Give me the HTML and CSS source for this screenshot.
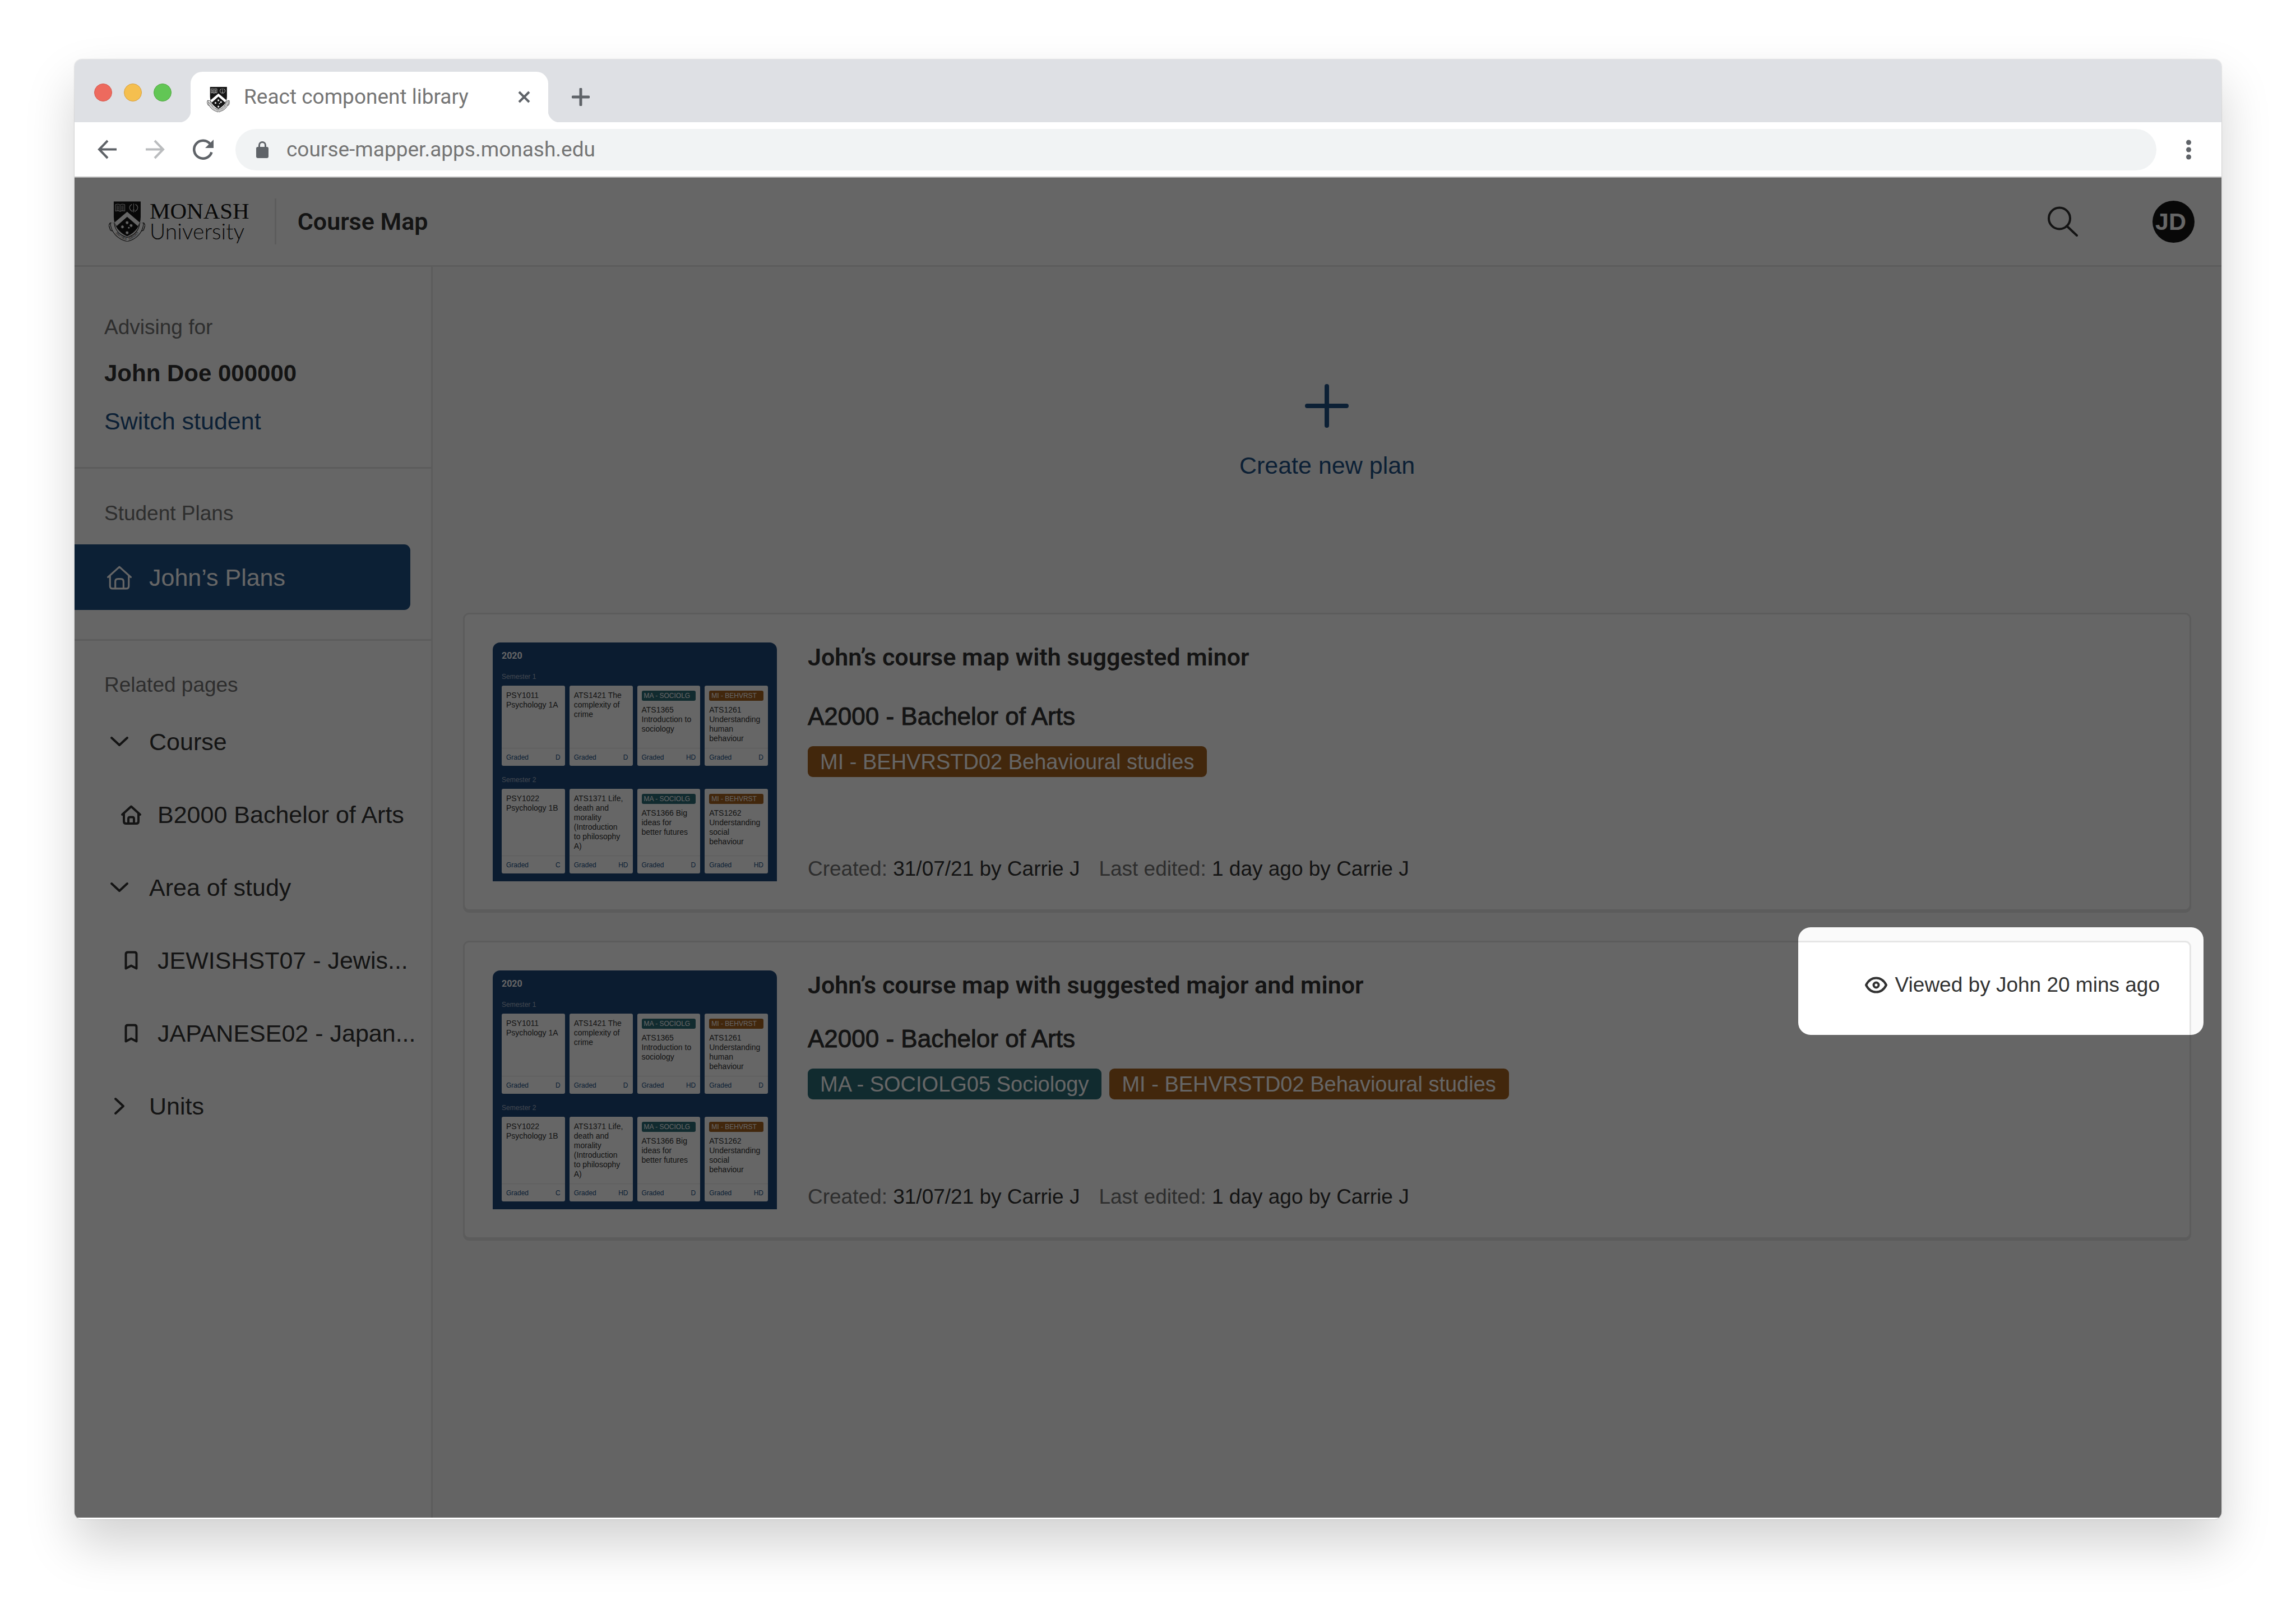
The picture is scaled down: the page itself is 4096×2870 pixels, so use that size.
FILE: index.html
```html
<!DOCTYPE html>
<html lang="en">
<head>
<meta charset="utf-8">
<title>React component library</title>
<link rel="stylesheet" href="styles.css">
</head>
<body>
<svg class="sprite" aria-hidden="true">
  <symbol id="crest" viewBox="0 0 218 240">
    <path d="M9 128L0 142L10 172L22 178M209 128L218 142L208 172L196 178M9 128L28 136M209 128L190 136" fill="#fff" stroke="#161616" stroke-width="4"/>
    <path d="M21 130C26 182 62 215 110 228C158 215 192 182 197 130" fill="none" stroke="#161616" stroke-width="27"/>
    <path d="M21 130C26 182 62 215 110 228C158 215 192 182 197 130" fill="none" stroke="#fff" stroke-width="20"/>
    <path d="M30 0H191V92C191 146 160 186 110 209C60 186 30 146 30 92Z" fill="#161616"/>
    <path d="M110 62L186 127L174 148L110 92L47 148L34 127Z" fill="#fff"/>
    <g fill="none" stroke="#fff" stroke-width="3">
      <path d="M40 19C52 15 62 16 68 21C74 16 84 15 96 19V58C84 55 74 56 68 61C62 56 52 55 40 58Z M68 21V61"/>
      <path d="M46 27L62 29M46 35L62 37M46 43L62 45M46 51L62 53M74 29L90 27M74 37L90 35M74 45L90 43M74 53L90 51"/>
      <path d="M149 13V66M143 52H155"/>
      <path d="M138 18C120 28 120 50 142 60M160 18C178 28 178 50 156 60" stroke-width="5" stroke-dasharray="5 2"/>
    </g>
    <g fill="#fff">
      <path d="M110 116l3 6 6-1-3 5 4 5-6 1-1 6-3-4-5 3 0-6-6-2 5-4-2-5 6 1z"/>
      <path d="M134 133l3 6 6-1-3 5 4 5-6 1-1 6-3-4-5 3 0-6-6-2 5-4-2-5 6 1z"/>
      <path d="M82 141l3 6 6-1-3 5 4 5-6 1-1 6-3-4-5 3 0-6-6-2 5-4-2-5 6 1z"/>
      <path d="M110 176l3 6 6-1-3 5 4 5-6 1-1 6-3-4-5 3 0-6-6-2 5-4-2-5 6 1z"/>
      <circle cx="120" cy="158" r="5"/>
    </g>
  </symbol>
  <symbol id="home" viewBox="0 0 44 44">
    <path d="M2.500 21.500L22 4L41.500 21.500M6 19V36.500C6 39.500 8 41 10.500 41H33.500C36 41 38 39.500 38 36.500V19M15 41V29C15 26 17 24.500 19.500 24.500H24.500C27 24.500 29 26 29 29V41"/>
  </symbol>
  <symbol id="home-small" viewBox="0 0 44 44">
    <path d="M6 22L22 7.500L38 22M9 20V34C9 36.500 10.500 38 13 38H31C33.500 38 35 36.500 35 34V20M17 38V29.500C17 27.500 18 26.500 20 26.500H24C26 26.500 27 27.500 27 29.500V38"/>
  </symbol>
  <symbol id="bookmark" viewBox="0 0 44 44">
    <path d="M12.500 36.500V11C12.500 8.500 14 7.500 16 7.500H28C30 7.500 31.500 8.500 31.500 11V36.500L22 31.500Z"/>
  </symbol>
  <symbol id="chevron" viewBox="0 0 52 52">
    <path d="M12 19L26 32L40 19"/>
  </symbol>
  <symbol id="chevron-closed" viewBox="0 0 52 52">
    <path d="M19 13L33 26L19 39"/>
  </symbol>
</svg>

<div class="window">
  <div class="tabstrip">
    <div class="lights"><i class="light light-red"></i><i class="light light-amber"></i><i class="light light-green"></i></div>
    <div class="tab">
      <svg class="favicon" viewBox="0 0 218 240" aria-hidden="true"><use href="#crest"/><path class="motto-marks" d="M21 130C26 182 62 215 110 228C158 215 192 182 197 130"/></svg>
      <span class="tab-title">React component library</span>
      <button class="plain tab-close" aria-label="Close tab">
        <svg width="22" height="22" viewBox="0 0 22 22"><path d="M2 2L20 20M20 2L2 20" stroke="#5f6368" stroke-width="4"/></svg>
      </button>
    </div>
    <button class="plain tab-new" aria-label="New tab">
      <svg width="32" height="32" viewBox="0 0 32 32"><path d="M16 2V30M2 16H30" stroke="#5f6368" stroke-width="5" stroke-linecap="round"/></svg>
    </button>
  </div>

  <div class="toolbar">
    <div class="nav">
      <button class="plain" aria-label="Back"><svg width="35" height="35" viewBox="0 0 35 35"><path d="M34 17.500H4M18 2L3 17.500L18 33" fill="none" stroke="#5f6368" stroke-width="4"/></svg></button>
      <button class="plain" aria-label="Forward"><svg width="35" height="35" viewBox="0 0 35 35"><path d="M1 17.500H31M17 2L32 17.500L17 33" fill="none" stroke="#babcbe" stroke-width="4"/></svg></button>
      <button class="plain" aria-label="Reload"><svg width="37" height="37" viewBox="0 0 37 37"><path d="M31 9A16 16 0 1 0 33.500 23.500" fill="none" stroke="#5f6368" stroke-width="4.500"/><path d="M37 1V16H22Z" fill="#5f6368"/></svg></button>
    </div>
    <div class="address">
      <svg width="22" height="30" viewBox="0 0 22 30" aria-hidden="true"><rect y="10" width="22" height="20" rx="3" fill="#5f6368"/><path d="M5.500 12V7A5.500 5.500 0 0 1 16.500 7V12" fill="none" stroke="#5f6368" stroke-width="3"/></svg>
      <input class="url" type="text" aria-label="Address" value="course-mapper.apps.monash.edu">
    </div>
    <button class="plain" aria-label="Browser menu"><svg width="9" height="36" viewBox="0 0 9 36"><g fill="#5f6368"><circle cx="4.500" cy="5" r="4.500"/><circle cx="4.500" cy="18" r="4.500"/><circle cx="4.500" cy="31" r="4.500"/></g></svg></button>
  </div>

  <div class="app">
    <header class="header">
      <a class="logo" href="#" aria-label="Monash University">
        <svg class="logo-crest" viewBox="0 0 218 240" aria-hidden="true">
          <use href="#crest"/>
          <path id="motto-line" d="M16 138C26 184 62 221 110 233C158 221 192 184 202 138" fill="none"/>
          <text class="motto"><textPath href="#motto-line" startOffset="50%" text-anchor="middle">ANCORA · IMPARO</textPath></text>
        </svg>
        <span class="logo-text"><span class="logo-name">MONASH</span><span class="logo-kind">University</span></span>
      </a>
      <h1 class="product">Course Map</h1>
      <button class="plain search" aria-label="Search">
        <svg width="54" height="54" viewBox="0 0 54 54"><circle cx="21" cy="21.500" r="19" fill="none" stroke="#323232" stroke-width="4"/><path d="M34 35L52 52" stroke="#323232" stroke-width="4" stroke-linecap="round"/></svg>
      </button>
      <button class="plain avatar" aria-label="Account: JD">JD</button>
    </header>

    <div class="body">
      <aside class="sidebar">
        <section class="student">
          <p class="label">Advising for</p>
          <p class="student-name">John Doe 000000</p>
          <a class="link" href="#">Switch student</a>
        </section>
        <nav class="plans" aria-label="Student plans">
          <p class="label">Student Plans</p>
          <a class="item item-active" href="#"><svg class="icon" aria-hidden="true"><use href="#home"/></svg>John’s Plans</a>
        </nav>
        <nav class="related" aria-label="Related pages">
          <p class="label">Related pages</p>
          <button class="plain item"><svg class="icon" aria-hidden="true"><use href="#chevron"/></svg>Course</button>
          <a class="item item-nested" href="#"><svg class="icon" aria-hidden="true"><use href="#home-small"/></svg>B2000 Bachelor of Arts</a>
          <button class="plain item"><svg class="icon" aria-hidden="true"><use href="#chevron"/></svg>Area of study</button>
          <a class="item item-nested" href="#"><svg class="icon" aria-hidden="true"><use href="#bookmark"/></svg>JEWISHST07 - Jewis...</a>
          <a class="item item-nested" href="#"><svg class="icon" aria-hidden="true"><use href="#bookmark"/></svg>JAPANESE02 - Japan...</a>
          <button class="plain item"><svg class="icon" aria-hidden="true"><use href="#chevron-closed"/></svg>Units</button>
        </nav>
      </aside>

      <main class="main">
        <div class="create">
          <button class="plain create-button">
            <svg width="78" height="78" viewBox="0 0 78 78" aria-hidden="true"><path d="M39 4V74M4 39H74" stroke="#205086" stroke-width="8" stroke-linecap="round"/></svg>
            Create new plan
          </button>
        </div>

        <article class="card">
          <div class="map">
            <p class="map-year">2020</p>
            <p class="map-term">Semester 1</p>
            <div class="units">
              <div class="unit"><p>PSY1011<br>Psychology 1A</p><div class="grade"><span>Graded</span><span>D</span></div></div>
              <div class="unit"><p>ATS1421 The<br>complexity of<br>crime</p><div class="grade"><span>Graded</span><span>D</span></div></div>
              <div class="unit"><span class="chip major">MA - SOCIOLG</span><p>ATS1365<br>Introduction to<br>sociology</p><div class="grade"><span>Graded</span><span>HD</span></div></div>
              <div class="unit"><span class="chip minor">MI - BEHVRST</span><p>ATS1261<br>Understanding<br>human<br>behaviour</p><div class="grade"><span>Graded</span><span>D</span></div></div>
            </div>
            <p class="map-term">Semester 2</p>
            <div class="units units-tall">
              <div class="unit"><p>PSY1022<br>Psychology 1B</p><div class="grade"><span>Graded</span><span>C</span></div></div>
              <div class="unit"><p>ATS1371 Life,<br>death and<br>morality<br>(Introduction<br>to philosophy<br>A)</p><div class="grade"><span>Graded</span><span>HD</span></div></div>
              <div class="unit"><span class="chip major">MA - SOCIOLG</span><p>ATS1366 Big<br>ideas for<br>better futures</p><div class="grade"><span>Graded</span><span>D</span></div></div>
              <div class="unit"><span class="chip minor">MI - BEHVRST</span><p>ATS1262<br>Understanding<br>social<br>behaviour</p><div class="grade"><span>Graded</span><span>HD</span></div></div>
            </div>
          </div>
          <div class="details">
            <div class="card-head"><h2 class="card-title">John’s course map with suggested minor</h2></div>
            <p class="course">A2000 - Bachelor of Arts</p>
            <div class="tags"><span class="tag minor">MI - BEHVRSTD02 Behavioural studies</span></div>
            <p class="meta"><span><span class="muted">Created:</span> 31/07/21 by Carrie J</span><span><span class="muted">Last edited:</span> 1 day ago by Carrie J</span></p>
          </div>
        </article>

        <article class="card card-compact">
          <div class="map">
            <p class="map-year">2020</p>
            <p class="map-term">Semester 1</p>
            <div class="units">
              <div class="unit"><p>PSY1011<br>Psychology 1A</p><div class="grade"><span>Graded</span><span>D</span></div></div>
              <div class="unit"><p>ATS1421 The<br>complexity of<br>crime</p><div class="grade"><span>Graded</span><span>D</span></div></div>
              <div class="unit"><span class="chip major">MA - SOCIOLG</span><p>ATS1365<br>Introduction to<br>sociology</p><div class="grade"><span>Graded</span><span>HD</span></div></div>
              <div class="unit"><span class="chip minor">MI - BEHVRST</span><p>ATS1261<br>Understanding<br>human<br>behaviour</p><div class="grade"><span>Graded</span><span>D</span></div></div>
            </div>
            <p class="map-term">Semester 2</p>
            <div class="units units-tall">
              <div class="unit"><p>PSY1022<br>Psychology 1B</p><div class="grade"><span>Graded</span><span>C</span></div></div>
              <div class="unit"><p>ATS1371 Life,<br>death and<br>morality<br>(Introduction<br>to philosophy<br>A)</p><div class="grade"><span>Graded</span><span>HD</span></div></div>
              <div class="unit"><span class="chip major">MA - SOCIOLG</span><p>ATS1366 Big<br>ideas for<br>better futures</p><div class="grade"><span>Graded</span><span>D</span></div></div>
              <div class="unit"><span class="chip minor">MI - BEHVRST</span><p>ATS1262<br>Understanding<br>social<br>behaviour</p><div class="grade"><span>Graded</span><span>HD</span></div></div>
            </div>
          </div>
          <div class="details">
            <div class="card-head">
              <h2 class="card-title">John’s course map with suggested major and minor</h2>
              <p class="viewed"><svg width="40" height="30" viewBox="0 0 40 30" aria-hidden="true"><path d="M2 15C6 7 12 2.500 20 2.500S34 7 38 15C34 23 28 27.500 20 27.500S6 23 2 15Z" fill="none" stroke="#323232" stroke-width="4"/><circle cx="20" cy="15" r="4.500" fill="none" stroke="#323232" stroke-width="4"/></svg>Viewed by John 20 mins ago</p>
            </div>
            <p class="course">A2000 - Bachelor of Arts</p>
            <div class="tags"><span class="tag major">MA - SOCIOLG05 Sociology</span><span class="tag minor">MI - BEHVRSTD02 Behavioural studies</span></div>
            <p class="meta"><span><span class="muted">Created:</span> 31/07/21 by Carrie J</span><span><span class="muted">Last edited:</span> 1 day ago by Carrie J</span></p>
          </div>
          <div class="spotlight"></div>
        </article>
      </main>
    </div>
  </div>
</div>
</body>
</html>
```
FILE: styles.css
```css
* { box-sizing: border-box; }

body {
  margin: 0;
  min-height: 100vh;
  padding: 106px 133px 160px;
  display: flex;
  flex-direction: column;
  background: #fff;
  color: #323232;
  font-family: "Liberation Sans", Arial, sans-serif;
  font-size: 43px;
  line-height: 52px;
}

h1, h2, p { margin: 0; }
a { color: inherit; text-decoration: none; }
svg { display: block; flex: none; }

.sprite { position: absolute; width: 0; height: 0; }

.plain {
  margin: 0;
  padding: 0;
  border: 0;
  background: none;
  color: inherit;
  font: inherit;
  text-align: left;
}

.motto {
  font-family: "Liberation Serif", serif;
  font-size: 19px;
  fill: #161616;
}
.motto-marks {
  fill: none;
  stroke: #161616;
  stroke-width: 12;
  stroke-dasharray: 4 9;
}

/* Browser window */
.window {
  flex: 1;
  display: flex;
  flex-direction: column;
  padding-bottom: 3px;
  overflow: hidden;
  border-radius: 13px;
  background: #fff;
  box-shadow: 0 0 2px rgba(0, 0, 0, .3), 0 44px 88px rgba(0, 0, 0, .18);
}

.tabstrip {
  display: flex;
  height: 112px;
  padding-left: 35px;
  background: #dee0e4;
  font-family: Roboto, sans-serif;
}

.lights { display: flex; gap: 21px; padding-top: 43px; }
.light { width: 32px; height: 32px; border-radius: 50%; border: 1px solid; }
.light-red { background: #ed6a5e; border-color: #d65a4f; }
.light-amber { background: #f5bf4f; border-color: #d8a140; }
.light-green { background: #62c655; border-color: #55a845; }

.tab {
  position: relative;
  display: flex;
  align-items: center;
  width: 638px;
  margin: 22px 0 0 34px;
  padding: 0 32px 0 29px;
  border-radius: 21px 21px 0 0;
  background: #fff;
}
.tab::before, .tab::after {
  content: "";
  position: absolute;
  bottom: 0;
  width: 21px;
  height: 21px;
}
.tab::before { right: 100%; background: radial-gradient(circle at 0 0, transparent 21px, #fff 22px); }
.tab::after { left: 100%; background: radial-gradient(circle at 100% 0, transparent 21px, #fff 22px); }
.favicon { width: 41px; height: 45px; margin-top: 8px; }
.tab-title { margin-left: 25px; font-size: 37px; color: #757575; }
.tab-close { margin-left: auto; }
.tab-new { padding: 22px 0 0 42px; }

.toolbar {
  display: flex;
  align-items: center;
  height: 99px;
  padding: 0 54px 0 41px;
  border-bottom: 2px solid #b4b4b4;
}
.nav { display: flex; gap: 50px; }
.address {
  flex: 1;
  display: flex;
  align-items: center;
  gap: 32px;
  height: 74px;
  margin: 0 53px 0 39px;
  padding: 0 37px;
  border-radius: 37px;
  background: #f1f3f4;
}
.url {
  flex: 1;
  min-width: 0;
  padding: 0;
  border: 0;
  background: none;
  font-family: Roboto, sans-serif;
  font-size: 37px;
  color: #757575;
}

/* Application */
.app {
  flex: 1;
  display: flex;
  flex-direction: column;
  position: relative;
  isolation: isolate;
  overflow: hidden;
}

.header {
  display: flex;
  align-items: center;
  height: 159px;
  padding: 0 48px 0 61px;
  border-bottom: 3px solid #e6e6e6;
}
.logo { display: flex; align-items: center; gap: 8px; color: #161616; }
.logo-crest { width: 65px; height: 72px; }
.logo-text { display: flex; flex-direction: column; padding-bottom: 2px; }
.logo-name { font-family: "Liberation Serif", serif; font-size: 41px; line-height: 36px; }
.logo-kind { font-family: Lato, sans-serif; font-weight: 300; font-size: 39px; line-height: 36px; }
.product {
  margin-left: 45px;
  padding: 15px 0 15px 38px;
  border-left: 3px solid #e6e6e6;
  font-family: Roboto, sans-serif;
  font-size: 43px;
  font-weight: 600;
}
.search { margin-left: auto; }
.avatar {
  width: 75px;
  height: 75px;
  margin-left: 133px;
  padding-right: 10px;
  border-radius: 50%;
  background: #161616;
  color: #fff;
  font-weight: 700;
  text-align: center;
}

.body { flex: 1; display: flex; }

.sidebar {
  flex: none;
  width: 639px;
  border-right: 3px solid #e6e6e6;
}
.label { padding-left: 53px; font-size: 37px; line-height: 44px; color: #737373; }
.student { padding: 86px 0 56px; border-bottom: 3px solid #e6e6e6; }
.student-name { margin: 34px 0 33px; padding-left: 53px; font-size: 42px; font-weight: 700; }
.link { display: block; padding-left: 53px; color: #205086; }
.plans { padding: 58px 0 52px; border-bottom: 3px solid #e6e6e6; }
.related { padding-top: 57px; }

.item {
  display: flex;
  align-items: center;
  gap: 27px;
  width: 100%;
  height: 130px;
  padding-left: 54px;
  white-space: nowrap;
}
.related .label { margin-bottom: 14px; }
.item-nested { gap: 25px; padding-left: 79px; }
.item-active {
  width: auto;
  height: 117px;
  margin: 33px 37px 0 0;
  border-radius: 0 11px 11px 0;
  background: #205086;
  color: #fff;
}
.icon {
  width: 52px;
  height: 52px;
  fill: none;
  stroke: currentColor;
  stroke-width: 4;
  stroke-linecap: round;
  stroke-linejoin: round;
}
.item-active .icon { padding: 3px; stroke-width: 3; }
.item-nested .icon { width: 44px; height: 44px; }

.main {
  flex: 1;
  display: flex;
  flex-direction: column;
  gap: 53px;
  padding: 0 54px;
  background: #fafafa;
}
.create { display: flex; justify-content: center; padding: 209px 0 184px; }
.create-button {
  display: flex;
  flex-direction: column;
  align-items: center;
  gap: 41px;
  color: #205086;
}

.card {
  display: flex;
  gap: 55px;
  position: relative;
  padding: 50px 53px 50px 50px;
  border: 3px solid #e6e6e6;
  border-radius: 11px;
  background: #fff;
  box-shadow: 0 3px 0 #e6e6e6;
}
.details { flex: 1; display: flex; flex-direction: column; align-items: flex-start; }
.card-head { display: flex; justify-content: space-between; align-items: center; width: 100%; }
.card-title { font-family: Roboto, sans-serif; font-size: 43px; font-weight: 600; }
.viewed { display: flex; align-items: center; gap: 14px; font-size: 37px; line-height: 44px; }
.course { margin-top: 54px; font-size: 44px; -webkit-text-stroke: 1px; }
.card-compact .course { margin-top: 44px; }
.tags { display: flex; gap: 14px; margin-top: 27px; }
.tag {
  padding: 6px 23px 5px 22px;
  border-radius: 9px;
  color: #fff;
  font-size: 38px;
  line-height: 44px;
}
.major { background: #2c6b77; }
.minor { background: #a6611f; }
.meta { display: flex; gap: 34px; margin-top: auto; font-size: 37px; line-height: 44px; }
.muted { color: #737373; }

/* Dims the whole application except the area it covers */
.spotlight {
  position: absolute;
  top: -27px;
  right: -25px;
  z-index: 10;
  width: 723px;
  height: 192px;
  border-radius: 22px;
  box-shadow: 0 0 0 5000px rgba(0, 0, 0, .6);
  pointer-events: none;
}

/* Course map preview */
.map {
  flex: none;
  width: 507px;
  padding: 14px 16px;
  border-radius: 13px 13px 0 0;
  background: #1d4678;
  color: #fff;
}
.map-year { font: 700 16px/20px Roboto, sans-serif; }
.map-term { margin: 19px 0 8px; font-size: 12px; line-height: 16px; color: #a9b7c9; }
.units + .map-term { margin-top: 17px; }
.units { display: grid; grid-template-columns: repeat(4, 1fr); gap: 8px; height: 143px; }
.units-tall { height: 151px; }
.unit {
  display: flex;
  flex-direction: column;
  padding: 9px 8px 0;
  border-radius: 3px;
  background: #fff;
  color: #323232;
  font-size: 14px;
  line-height: 17px;
  white-space: nowrap;
}
.chip {
  margin-bottom: 8px;
  padding: 0 4px;
  border-radius: 3px;
  color: #fff;
  font-size: 12px;
  line-height: 18px;
}
.grade {
  display: flex;
  justify-content: space-between;
  margin: auto -8px 0;
  padding: 8px 8px 7px;
  border-top: 1px solid #e6e6e6;
  color: #205086;
  font-size: 12px;
  line-height: 16px;
}
```
